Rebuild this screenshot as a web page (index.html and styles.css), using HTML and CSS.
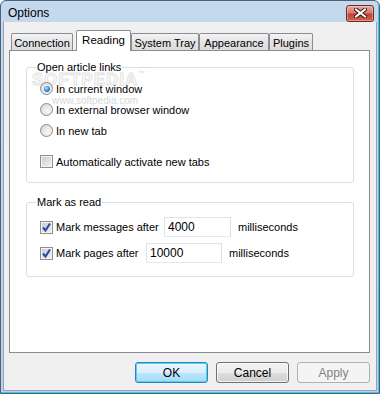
FILE: index.html
```html
<!DOCTYPE html>
<html lang="en">
    <head>
    <meta charset="UTF-8" />
    <title>Options</title>
    <link rel="stylesheet" href="styles.css">
    </head>
    <body>
    <div class="window">
        <!-- Caption bar -->
        <div class="titlebar">
        <span class="title">Options</span>
        <button class="close" aria-label="Close">
            <svg width="13" height="10" viewBox="0 0 13 10">
            <path d="M2 1.5 L11 8.5 M11 1.5 L2 8.5" stroke="#3b1410" stroke-width="4" stroke-linecap="square"/>
            <path d="M2 1.5 L11 8.5 M11 1.5 L2 8.5" stroke="#ffffff" stroke-width="2" stroke-linecap="square"/>
            </svg>
        </button>
        </div>

        <div class="client">
        <div class="tabs">
            <div class="tab tab-connection">Connection</div>
            <div class="tab tab-reading active">Reading</div>
            <div class="tab tab-tray">System Tray</div>
            <div class="tab tab-appearance">Appearance</div>
            <div class="tab tab-plugins">Plugins</div>
        </div>

        <div class="panel">
            <div class="watermark">SOFTPEDIA<span class="tm">™</span></div>
            <div class="watermark-url">www.softpedia.com</div>

            <fieldset class="group group-links">
            <legend>Open article links</legend>
            <label class="option"><span class="radio checked"></span>In current window</label>
            <label class="option"><span class="radio"></span>In external browser window</label>
            <label class="option"><span class="radio"></span>In new tab</label>
            <label class="option option-gap"><span class="check"></span>Automatically activate new tabs</label>
            </fieldset>

            <fieldset class="group group-read">
            <legend>Mark as read</legend>
            <div class="option row">
                <span class="check checked">
                <svg width="11" height="11" viewBox="0 0 11 11"><path d="M2 5.5 L4.5 8.5 L9 1.5" fill="none" stroke="#2a4f9c" stroke-width="2.2"/></svg>
                </span>
                <span class="label label-messages">Mark messages after</span>
                <input class="field field-messages" type="text" value="4000">
                <span class="unit">milliseconds</span>
            </div>
            <div class="option row">
                <span class="check checked">
                <svg width="11" height="11" viewBox="0 0 11 11"><path d="M2 5.5 L4.5 8.5 L9 1.5" fill="none" stroke="#2a4f9c" stroke-width="2.2"/></svg>
                </span>
                <span class="label label-pages">Mark pages after</span>
                <input class="field field-pages" type="text" value="10000">
                <span class="unit">milliseconds</span>
            </div>
            </fieldset>
        </div>

        <div class="buttons">
            <button class="btn default">OK</button>
            <button class="btn">Cancel</button>
            <button class="btn" disabled>Apply</button>
        </div>
        </div>
    </div>
    </body>
</html>
```

FILE: styles.css
```css
body {
margin: 0;
font-family: "Liberation Sans", Arial, sans-serif;
font-size: 11px;
color: #000;
background: #fff;
}
.window {
width: 380px;
height: 394px;
box-sizing: border-box;
border: 1px solid #4d6177;
border-radius: 6px 6px 0 0;
padding: 0 2px 2px 2px;
background: linear-gradient(#c4d8ee, #bcd2ea);
box-shadow: inset -1px -1px 0 #3cc6ee;
display: flex;
flex-direction: column;
}
/* Caption */
.titlebar {
height: 21px;
box-sizing: border-box;
padding: 3px 3px 0 5px;
display: flex;
align-items: center;
justify-content: space-between;
}
.title {
font-size: 12px;
}
.close {
width: 28px;
height: 17px;
padding: 0;
border: 1px solid #6b2a24;
border-radius: 3px;
background: linear-gradient(#e8a89c 0%, #d47a6c 45%, #c3412f 55%, #d0624f 100%);
box-shadow: inset 0 0 0 1px rgba(255,255,255,0.35);
display: flex;
align-items: center;
justify-content: center;
}
.client {
flex: 1;
background: #f0f0f0;
border: 1px solid #8fa2b6;
border-top: none;
display: flex;
flex-direction: column;
}
/* Tab strip */
.tabs {
margin-top: 8px;
padding-left: 7px;
height: 20px;
display: flex;
align-items: flex-end;
position: relative;
z-index: 1;
}
.tab {
height: 17px;
box-sizing: border-box;
border: 1px solid #898c95;
border-bottom: none;
border-radius: 2px 2px 0 0;
background: linear-gradient(#f4f4f4, #e4e4e4 50%, #dcdcdc);
display: flex;
align-items: center;
justify-content: center;
padding-top: 1px;
font-size: 11px;
}
.tab.active {
height: 21px;
margin-bottom: -1px;
background: #fff;
padding-top: 0;
padding-bottom: 3px;
font-size: 11.5px;
}
.tab-connection { width: 62px; }
.tab-reading { width: 55px; margin-left: 3px; }
.tab-tray { width: 68px; }
.tab-appearance { width: 70px; }
.tab-plugins { width: 44px; }
/* Page */
.panel {
position: relative;
margin-left: 5px;
width: 361px;
height: 303px;
box-sizing: border-box;
border: 1px solid #898c95;
background: #fff;
padding: 10px 15px 0 16px;
}
.watermark {
position: absolute;
left: 22px;
top: 19px;
font-size: 17px;
font-weight: bold;
letter-spacing: 1px;
color: transparent;
-webkit-text-stroke: 1px #e2e2e2;
}
.tm {
font-size: 7px;
vertical-align: top;
-webkit-text-stroke: 0;
color: #e0e0e0;
}
.watermark-url {
position: absolute;
left: 42px;
top: 44px;
font-size: 10px;
color: #d8d8d8;
}
.group {
margin: 0;
min-width: 0;
border: 1px solid #d5dfe5;
border-radius: 3px;
padding: 4px 8px 10px 13px;
position: relative;
}
.group legend {
padding: 0 1px;
margin-left: -4px;
line-height: 13px;
}
.group-read {
margin-top: 13px;
padding-top: 7px;
padding-bottom: 12px;
}
.option {
height: 21px;
display: flex;
align-items: center;
}
.option-gap {
margin-top: 10px;
}
.row {
height: 22px;
}
.row + .row {
margin-top: 4px;
}
/* Vista style radio and check boxes */
.radio {
width: 13px;
height: 13px;
box-sizing: border-box;
border: 1px solid #8a8a8a;
border-radius: 50%;
background: radial-gradient(circle at 65% 65%, #f8f8f8, #d4d4d4);
margin-right: 3px;
display: flex;
align-items: center;
justify-content: center;
}
.radio.checked::after {
content: "";
width: 6px;
height: 6px;
border-radius: 50%;
background: radial-gradient(circle at 40% 35%, #b8e2ff, #2a86d4 55%, #0d4f9a);
}
.check {
width: 13px;
height: 13px;
box-sizing: border-box;
border: 1px solid #8e8f8f;
background: linear-gradient(135deg, #c9ccd2, #f2f2f2);
box-shadow: inset 0 0 0 1px #f4f4f4;
margin-right: 3px;
display: flex;
align-items: center;
justify-content: center;
}
/* WinForms places the boxes at fixed offsets */
.label-messages { width: 108px; }
.label-pages { width: 90px; }
.field {
height: 20px;
box-sizing: border-box;
border: 1px solid #abadb3;
border-top-color: #e3e3e3;
border-left-color: #e2e3ea;
border-right-color: #dbdfe6;
border-bottom-color: #e3e9ef;
padding: 0 3px;
font-family: inherit;
font-size: 12px;
}
.field-messages { width: 67px; }
.field-pages { width: 76px; }
.unit {
margin-left: 7px;
}
/* Dialog buttons */
.buttons {
margin-top: 9px;
padding-right: 6px;
display: flex;
justify-content: flex-end;
gap: 8px;
}
.btn {
width: 73px;
height: 21px;
padding: 0;
font-family: inherit;
font-size: 12px;
color: #000;
border: 1px solid #707070;
border-radius: 3px;
background: linear-gradient(#f2f2f2 0%, #ebebeb 50%, #dddddd 51%, #cfcfcf 100%);
box-shadow: inset 0 0 0 1px rgba(255,255,255,0.7);
}
.btn.default {
border-color: #3c7fb1;
box-shadow: inset 0 0 0 1px #48d7fb;
background: linear-gradient(#eaf6fd 0%, #d9f0fc 50%, #bee6fd 51%, #a7d9f5 100%);
}
.btn:disabled {
border-color: #adb2b5;
background: #f4f4f4;
color: #838383;
box-shadow: none;
}
```
